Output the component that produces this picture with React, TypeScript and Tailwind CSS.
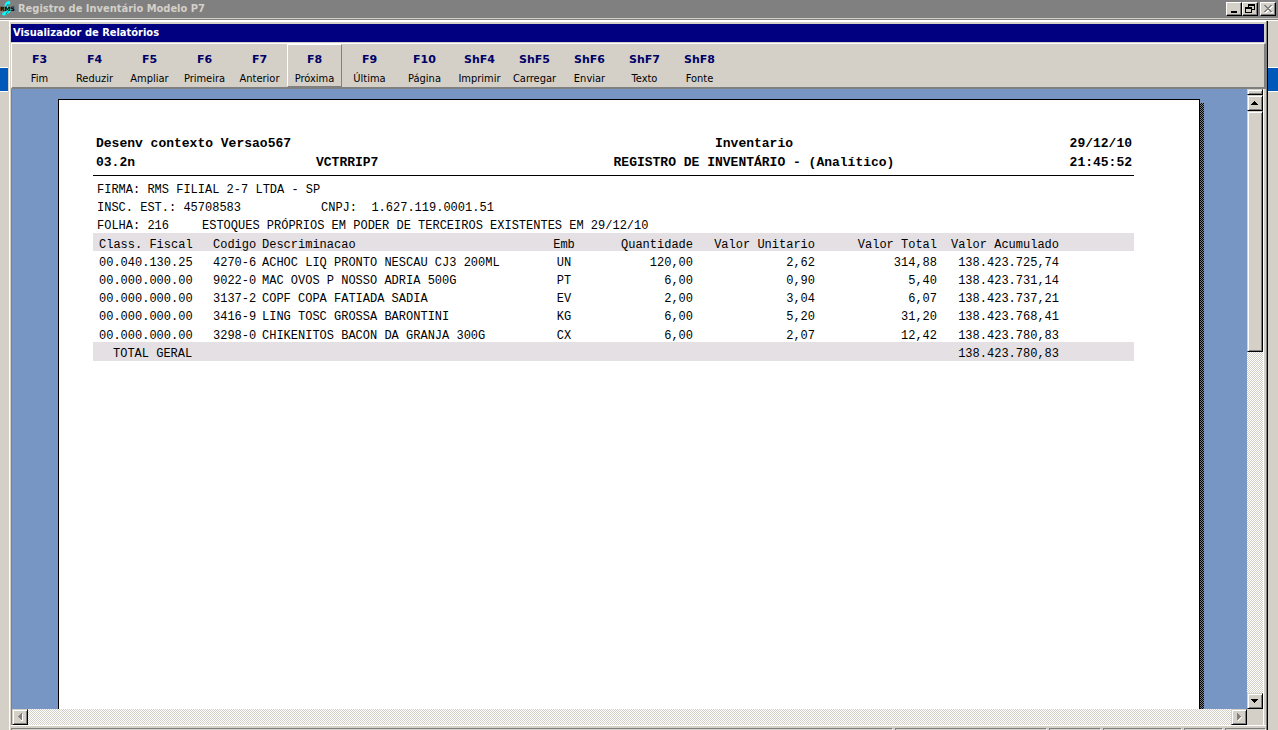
import type { ReactNode } from 'react';
import clsx from 'clsx';

interface IToolbarItem {
	shortcut: string;
	label: string;
	active?: boolean;
}

interface IReportRow {
	fiscal: string;
	code: string;
	description: string;
	unit: string;
	quantity: string;
	unitPrice: string;
	total: string;
	accumulated: string;
}

const toolbarItems: IToolbarItem[] = [
	{ shortcut: 'F3', label: 'Fim' },
	{ shortcut: 'F4', label: 'Reduzir' },
	{ shortcut: 'F5', label: 'Ampliar' },
	{ shortcut: 'F6', label: 'Primeira' },
	{ shortcut: 'F7', label: 'Anterior' },
	{ shortcut: 'F8', label: 'Próxima', active: true },
	{ shortcut: 'F9', label: 'Última' },
	{ shortcut: 'F10', label: 'Página' },
	{ shortcut: 'ShF4', label: 'Imprimir' },
	{ shortcut: 'ShF5', label: 'Carregar' },
	{ shortcut: 'ShF6', label: 'Enviar' },
	{ shortcut: 'ShF7', label: 'Texto' },
	{ shortcut: 'ShF8', label: 'Fonte' },
];

const rows: IReportRow[] = [
	{ fiscal: '00.040.130.25', code: '4270-6', description: 'ACHOC LIQ PRONTO NESCAU CJ3 200ML', unit: 'UN', quantity: '120,00', unitPrice: '2,62', total: '314,88', accumulated: '138.423.725,74' },
	{ fiscal: '00.000.000.00', code: '9022-0', description: 'MAC OVOS P NOSSO ADRIA 500G', unit: 'PT', quantity: '6,00', unitPrice: '0,90', total: '5,40', accumulated: '138.423.731,14' },
	{ fiscal: '00.000.000.00', code: '3137-2', description: 'COPF COPA FATIADA SADIA', unit: 'EV', quantity: '2,00', unitPrice: '3,04', total: '6,07', accumulated: '138.423.737,21' },
	{ fiscal: '00.000.000.00', code: '3416-9', description: 'LING TOSC GROSSA BARONTINI', unit: 'KG', quantity: '6,00', unitPrice: '5,20', total: '31,20', accumulated: '138.423.768,41' },
	{ fiscal: '00.000.000.00', code: '3298-0', description: 'CHIKENITOS BACON DA GRANJA 300G', unit: 'CX', quantity: '6,00', unitPrice: '2,07', total: '12,42', accumulated: '138.423.780,83' },
];

// Raised 3D edge shared by the scroll bar parts
const raised =
	'border border-t-[#d4d0c8] border-l-[#d4d0c8] border-r-black border-b-black bg-[#d4d0c8] shadow-[inset_1px_1px_0_#fff,inset_-1px_-1px_0_#808080]';

// Checkered scroll bar track
const dither = 'bg-[conic-gradient(#d4d0c8_25%,#fff_0_50%,#d4d0c8_0_75%,#fff_0)] bg-[length:2px_2px]';

const CaptionButton = ({ title, children }: { title: string; children: ReactNode }) => (
	<button
		aria-label={title}
		className="flex h-[14px] w-4 items-center justify-center border border-t-white border-l-white border-r-black border-b-black bg-[#d4d0c8] shadow-[inset_-1px_-1px_0_#808080]"
	>
		<svg width="12" height="10" viewBox="0 0 12 10" shapeRendering="crispEdges">
			{children}
		</svg>
	</button>
);

const ScrollButton = ({ title, children }: { title: string; children: ReactNode }) => (
	<button aria-label={title} className={clsx('flex size-4 shrink-0 items-center justify-center', raised)}>
		<svg width="12" height="12" viewBox="0 0 12 12" shapeRendering="crispEdges">
			{children}
		</svg>
	</button>
);

const TitleBar = () => (
	<header className="flex h-[18px] shrink-0 items-center justify-between bg-[#808080] pr-[2px]">
		<div className="flex items-center gap-[2px]">
			<svg width="16" height="16" viewBox="0 0 16 16">
				<path d="M10 1C7 2 5 4 7 6s3 4 1 5-4 1-5 3" fill="none" stroke="#00ffff" strokeWidth="3" />
				<path d="M8 3l-2 3M9 9l-3 4" fill="none" stroke="#008080" />
				<text x="0" y="10" fontSize="6" fontWeight="700" className="font-['DejaVu_Sans']">
					RMS
				</text>
			</svg>
			<h1 className="text-[11px] leading-4 font-bold whitespace-nowrap text-[#d4d0c8]">Registro de Inventário Modelo P7</h1>
		</div>
		<div className="flex">
			<CaptionButton title="Minimizar">
				<path d="M3 7h6v2H3z" />
			</CaptionButton>
			<CaptionButton title="Restaurar">
				<path d="M4 0h7v2H4zM4 2h1v1H4zM10 2h1v4h-1zM8 5h2v1H8zM1 3h7v2H1zM1 5h1v3H1zM7 5h1v3H7zM1 8h7v1H1z" />
			</CaptionButton>
			<div className="ml-[2px]">
				<CaptionButton title="Fechar">
					<path
						d="M3 2h2v1H3zM9 2h2v1H9zM4 3h2v1H4zM8 3h2v1H8zM5 4h4v1H5zM6 5h2v1H6zM5 6h4v1H5zM4 7h2v1H4zM8 7h2v1H8zM3 8h2v1H3zM9 8h2v1H9z"
						fill="#fff"
					/>
					<path
						d="M2 1h2v1H2zM8 1h2v1H8zM3 2h2v1H3zM7 2h2v1H7zM4 3h4v1H4zM5 4h2v1H5zM4 5h4v1H4zM3 6h2v1H3zM7 6h2v1H7zM2 7h2v1H2zM8 7h2v1H8z"
						fill="#808080"
					/>
				</CaptionButton>
			</div>
		</div>
	</header>
);

const Toolbar = () => (
	<nav className="flex h-[46px] shrink-0 border-t border-r-2 border-b-2 border-l border-t-white border-r-[#808080] border-b-[#808080] border-l-white">
		{toolbarItems.map((item) => (
			<button
				key={item.shortcut}
				className={clsx(
					'flex w-[55px] flex-col items-center justify-start border pt-[5px] text-[11px] leading-[19px]',
					item.active ? 'border-t-white border-r-[#808080] border-b-[#808080] border-l-white' : 'border-transparent',
				)}
			>
				<span className="font-['DejaVu_Sans'] font-bold text-[#000066]">{item.shortcut}</span>
				<span>{item.label}</span>
			</button>
		))}
	</nav>
);

const ReportPage = () => (
	<article className="flex-1 border-t border-r border-l border-black bg-white pt-[34px] pr-[65px] pl-[34px] font-['Liberation_Mono',monospace] text-[12px]">
		{/* Report heading */}
		<div className="grid grid-cols-[220px_220px_1fr_160px] border-b border-black pr-[2px] pb-[3px] pl-[3px] text-[13px] leading-[19px] font-bold whitespace-pre">
			<span className="col-span-2">Desenv contexto Versao567</span>
			<span className="text-center">Inventario</span>
			<span className="text-right">29/12/10</span>
			<span>03.2n</span>
			<span>VCTRRIP7</span>
			<span className="text-center">REGISTRO DE INVENTÁRIO - (Analítico)</span>
			<span className="text-right">21:45:52</span>
		</div>

		{/* Company data */}
		<div className="flex flex-col gap-1 pt-[7px] pl-1 leading-[14px] whitespace-pre">
			<p>FIRMA: RMS FILIAL 2-7 LTDA - SP</p>
			<p className="flex">
				<span className="w-[224px]">INSC. EST.: 45708583</span>
				<span>{'CNPJ:  1.627.119.0001.51'}</span>
			</p>
			<p className="flex">
				<span className="w-[105px]">FOLHA: 216</span>
				<span>ESTOQUES PRÓPRIOS EM PODER DE TERCEIROS EXISTENTES EM 29/12/10</span>
			</p>
		</div>

		<table className="w-full table-fixed text-right leading-3 whitespace-nowrap [&_td]:pt-[6px] [&_th]:pt-[6px] [&_th]:font-normal">
			<colgroup>
				<col className="w-[120px]" />
				<col className="w-[49px]" />
				<col className="w-[281px]" />
				<col className="w-[42px]" />
				<col className="w-[108px]" />
				<col className="w-[122px]" />
				<col className="w-[122px]" />
				<col className="w-[122px]" />
				<col />
			</colgroup>
			<thead>
				<tr className="bg-[#e4e0e4]">
					<th className="pl-[6px] text-left">Class. Fiscal</th>
					<th className="text-left">Codigo</th>
					<th className="text-left">Descriminacao</th>
					<th className="text-center">Emb</th>
					<th>Quantidade</th>
					<th>Valor Unitario</th>
					<th>Valor Total</th>
					<th>Valor Acumulado</th>
					<th />
				</tr>
			</thead>
			<tbody className="[&>tr:last-child>td]:pt-[7px]">
				{rows.map((row) => (
					<tr key={row.accumulated}>
						<td className="pl-[6px] text-left">{row.fiscal}</td>
						<td className="text-left">{row.code}</td>
						<td className="text-left">{row.description}</td>
						<td className="text-center">{row.unit}</td>
						<td>{row.quantity}</td>
						<td>{row.unitPrice}</td>
						<td>{row.total}</td>
						<td>{row.accumulated}</td>
						<td />
					</tr>
				))}
			</tbody>
			<tfoot>
				<tr className="bg-[#e4e0e4] [&>td]:pb-px">
					<td className="pl-5 text-left" colSpan={7}>TOTAL GERAL</td>
					<td>138.423.780,83</td>
					<td />
				</tr>
			</tfoot>
		</table>
	</article>
);

const VerticalScrollBar = () => (
	<div className={clsx('flex w-4 shrink-0 flex-col', dither)}>
		<div className={clsx('h-[6px] shrink-0', raised)} />
		<ScrollButton title="Rolar para cima">
			<path d="M5 4h1v1h1v1h1v1h1v1H2V7h1V6h1V5h1z" />
		</ScrollButton>
		<div className={clsx('h-[241px] shrink-0', raised)} />
		<div className="flex-1" />
		<ScrollButton title="Rolar para baixo">
			<path d="M2 4h7v1H8v1H7v1H6v1H5V7H4V6H3V5H2z" />
		</ScrollButton>
	</div>
);

const HorizontalScrollBar = () => (
	<div className="flex h-4 shrink-0 bg-[#d4d0c8] pr-4">
		<ScrollButton title="Rolar para a esquerda">
			<path d="M8 3h1v7H8zM7 9h1v1H7z" fill="#fff" />
			<path d="M7 2h1v7H7V8H6V7H5V6H4V5h1V4h1V3h1z" fill="#808080" />
		</ScrollButton>
		<div className={clsx('flex-1', dither)} />
		<ScrollButton title="Rolar para a direita">
			<path d="M5 9h1V8h1V7h1V6h1v1H8v1H7v1H6v1H5z" fill="#fff" />
			<path d="M4 2h1v1h1v1h1v1h1v1H7v1H6v1H5v1H4z" fill="#808080" />
		</ScrollButton>
	</div>
);

// Only the top edge of the status panels is visible at the bottom of the window
const StatusBar = () => (
	<footer className="grid h-[5px] shrink-0 grid-cols-[1fr_152px_52px_79px_39px_41px] gap-[2px] border-t border-white pt-[2px] *:border-t *:border-r *:border-l *:border-t-[#808080] *:border-r-white *:border-l-[#808080]">
		<div />
		<div />
		<div />
		<div />
		<div />
		<div />
	</footer>
);

const App = () => (
	<div className="flex h-screen flex-col overflow-hidden bg-[#d4d0c8] font-['DejaVu_Sans_Condensed','DejaVu_Sans',sans-serif] text-black">
		<TitleBar />
		<div className="mt-px h-[2px] shrink-0 border-t border-b border-t-[#808080] border-b-white" />

		<div className="flex min-h-0 flex-1">
			{/* Strip of the parent window on the left */}
			<div className="w-[9px] pt-[46px]">
				<div className="h-[25px] w-2 border-y border-white bg-[#0058b8]" />
			</div>

			<main className="flex min-w-0 flex-1 flex-col border-t border-l border-white pt-[2px] pl-px">
				<div className="mr-[2px] flex h-[18px] shrink-0 items-center bg-[#000080] pl-[2px]">
					<h2 className="text-[11px] leading-4 font-bold text-white">Visualizador de Relatórios</h2>
				</div>
				<div className="h-px shrink-0" />
				<Toolbar />

				{/* Report area */}
				<div className="mr-[2px] flex min-h-0 flex-1 flex-col border-r border-l border-l-[#808080] border-r-white">
					<div className="flex min-h-0 flex-1">
						<section className="flex min-w-0 flex-1 bg-[#7896c3] pt-[10px] pr-[43px] pl-[46px]">
							<ReportPage />
							<div className="mt-1 w-1 bg-[conic-gradient(#000_25%,#808080_0_50%,#000_0_75%,#808080_0)] bg-[length:2px_2px]" />
						</section>
						<VerticalScrollBar />
					</div>
					<HorizontalScrollBar />
				</div>
				<StatusBar />
			</main>

			{/* Right edge of the inner window, then the parent window strip */}
			<div className="w-[2px] border-r border-l border-l-[#808080] border-r-black" />
			<div className="w-[10px] pt-[46px]">
				<div className="h-[25px] border-y border-white bg-[#0058b8]" />
			</div>
		</div>
	</div>
);

export default App;
